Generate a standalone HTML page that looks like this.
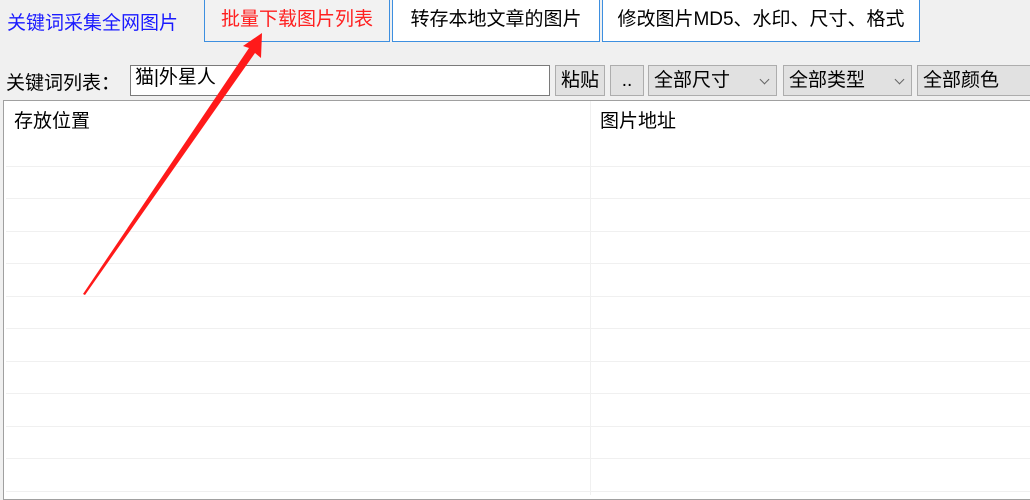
<!DOCTYPE html>
<html><head><meta charset="utf-8"><style>
*{box-sizing:border-box;margin:0;padding:0}
body{width:1030px;height:495px;background:#f0f0f0;position:relative;overflow:hidden;font-family:"Liberation Sans","WenQuanYi Zen Hei","Noto Sans CJK SC",sans-serif;font-size:19px;color:#000}
.a{position:absolute;white-space:nowrap}
.tab{position:absolute;top:0;height:42px;border:1px solid #3d8fe0;border-top:none;background:#fff;text-align:center;line-height:40px;font-size:19px}
.btn{position:absolute;top:65px;height:31px;border:1px solid #adadad;background:#e1e1e1;line-height:29px;font-size:19px}
.sel{padding-left:5px}
.sel:after{content:"";position:absolute;right:8px;top:10px;width:6px;height:6px;border-right:1px solid #666;border-bottom:1px solid #666;transform:rotate(45deg)}
.row{position:absolute;left:6px;right:0;height:1px;background:#f0f0f0}
</style></head><body>
<div class="a" style="left:7px;top:8px;color:#1a1aff;font-size:19px">关键词采集全网图片</div>
<div class="tab" style="left:204px;width:186px;background:#f2f2f2;color:#ff2020">批量下载图片列表</div>
<div class="tab" style="left:392px;width:208px">转存本地文章的图片</div>
<div class="tab" style="left:602px;width:318px">修改图片MD5、水印、尺寸、格式</div>
<div class="a" style="left:6px;top:68px;font-size:19px">关键词列表：</div>
<div class="a" style="left:130px;top:65px;width:420px;height:31px;background:#fff;border:1px solid #7a7a7a;padding-left:4px;line-height:24px;font-size:19px">猫|外星人</div>
<div class="btn" style="left:555px;width:50px;text-align:center">粘贴</div>
<div class="btn" style="left:610px;width:34px;text-align:center">..</div>
<div class="btn sel" style="left:648px;width:129px">全部尺寸</div>
<div class="btn sel" style="left:783px;width:129px">全部类型</div>
<div class="btn" style="left:917px;width:120px;padding-left:5px">全部颜色</div>
<div class="a" style="left:3px;top:100px;width:1030px;height:400px;background:#fff;border:1px solid #a0a0a0"></div>
<div class="a" style="left:590px;top:101px;width:1px;height:394px;background:#f0f0f0"></div>
<div class="a" style="left:14px;top:106px;font-size:19px">存放位置</div>
<div class="a" style="left:600px;top:106px;font-size:19px">图片地址</div>
<div class="row" style="top:166px"></div><div class="row" style="top:198px"></div><div class="row" style="top:231px"></div><div class="row" style="top:263px"></div><div class="row" style="top:296px"></div><div class="row" style="top:328px"></div><div class="row" style="top:361px"></div><div class="row" style="top:393px"></div><div class="row" style="top:426px"></div><div class="row" style="top:458px"></div><div class="row" style="top:491px"></div>
<svg class="a" style="left:0;top:0" width="1030" height="495"><polygon points="262,33 261,58 255,53 85,295 83,294 249,48 243,46" fill="#ff1a1a"/></svg>
</body></html>
